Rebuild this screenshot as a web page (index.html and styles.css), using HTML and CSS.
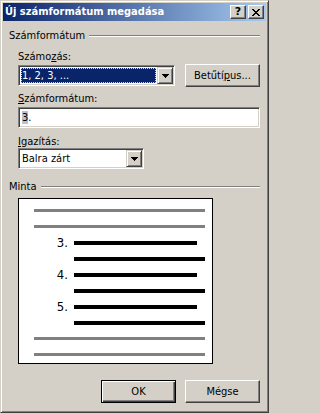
FILE: index.html
```html
<!DOCTYPE html>
<html lang="hu">
<head>
<meta charset="utf-8">
<title>Új számformátum megadása</title>
<link rel="stylesheet" href="styles.css">
</head>
<body>
<div class="window">
  <div class="titlebar">
    <span class="title">Új számformátum megadása</span>
    <div class="tbtns">
      <span class="tbtn help">?</span>
      <span class="tbtn close">
        <svg width="8" height="7" viewBox="0 0 8 7" shape-rendering="crispEdges"><path d="M0 0h2v1h-2zM6 0h2v1h-2zM1 1h2v1h-2zM5 1h2v1h-2zM2 2h4v1h-4zM3 3h2v1h-2zM2 4h4v1h-4zM1 5h2v1h-2zM5 5h2v1h-2zM0 6h2v1h-2zM6 6h2v1h-2z" fill="#000"/></svg>
      </span>
    </div>
  </div>
  <div class="body">
    <div class="group-head first"><span>Számformátum</span><i class="etch"></i></div>
    <div class="group">
      <div class="label first">Számo<u>z</u>ás:</div>
      <div class="row">
        <div class="combo wide">
          <div class="value sel">1, 2, 3, ...</div>
          <div class="drop"><svg width="7" height="4" viewBox="0 0 7 4" shape-rendering="crispEdges"><path d="M0 0h7v1h-7zM1 1h5v1h-5zM2 2h3v1h-3zM3 3h1v1h-1z" fill="#000"/></svg></div>
        </div>
        <div class="btn font">Betűtí<u>p</u>us...</div>
      </div>
      <div class="label l2"><u>S</u>zámformátum:</div>
      <div class="field"><span class="ph">3</span>.</div>
      <div class="label l3"><u>I</u>gazítás:</div>
      <div class="combo narrow">
        <div class="value">Balra zárt</div>
        <div class="drop"><svg width="7" height="4" viewBox="0 0 7 4" shape-rendering="crispEdges"><path d="M0 0h7v1h-7zM1 1h5v1h-5zM2 2h3v1h-3zM3 3h1v1h-1z" fill="#000"/></svg></div>
      </div>
    </div>
    <div class="group-head second"><span>Minta</span><i class="etch"></i></div>
    <div class="preview">
      <div class="pr"><i class="bar gray"></i></div>
      <div class="pr"><i class="bar gray"></i></div>
      <div class="pr"><span class="num">3.</span><i class="bar black short"></i></div>
      <div class="pr"><i class="bar black long"></i></div>
      <div class="pr"><span class="num">4.</span><i class="bar black short"></i></div>
      <div class="pr"><i class="bar black long"></i></div>
      <div class="pr"><span class="num">5.</span><i class="bar black short"></i></div>
      <div class="pr"><i class="bar black long"></i></div>
      <div class="pr"><i class="bar gray"></i></div>
      <div class="pr"><i class="bar gray"></i></div>
    </div>
    <div class="actions">
      <div class="btn default">OK</div>
      <div class="btn">Mégse</div>
    </div>
  </div>
</div>
</body>
</html>
```

FILE: styles.css
```css
html, body {
  margin: 0;
  padding: 0;
  background: #d4d0c8;
}
body {
  font-family: "DejaVu Sans Condensed", "DejaVu Sans", sans-serif;
  font-size: 11px;
  color: #000;
}
u { text-decoration: underline; text-underline-offset: 1px; }

.window {
  width: 269px;
  height: 413px;
  box-sizing: border-box;
  border: 1px solid;
  border-color: #d4d0c8 #404040 #404040 #d4d0c8;
  box-shadow: inset 1px 1px #fff, inset -1px -1px #808080;
  padding: 2px;
  background: #d4d0c8;
  display: flex;
  flex-direction: column;
}

.titlebar {
  height: 18px;
  display: flex;
  align-items: center;
  padding-left: 2px;
  background: linear-gradient(to right, #0a246a, #a6caf0);
}
.title {
  color: #fff;
  font-weight: bold;
  font-size: 11px;
  line-height: 18px;
  white-space: nowrap;
}
.tbtns {
  margin-left: auto;
  margin-right: 2px;
  display: flex;
  gap: 2px;
}
.tbtn {
  width: 16px;
  height: 14px;
  box-sizing: border-box;
  border: 1px solid;
  border-color: #fff #404040 #404040 #fff;
  box-shadow: inset -1px -1px #808080;
  background: #d4d0c8;
  display: flex;
  align-items: center;
  justify-content: center;
}
.tbtn.help {
  font-weight: bold;
  font-size: 11px;
  line-height: 12px;
  font-family: "DejaVu Sans", sans-serif;
}

.body {
  flex: 1;
  padding: 0 6px;
  display: flex;
  flex-direction: column;
}

.group-head {
  display: flex;
  align-items: center;
  height: 13px;
  line-height: 13px;
}
.group-head.first { margin-top: 8px; }
.group-head.second { margin-top: 11px; }
.etch {
  flex: 1;
  height: 0;
  border-top: 1px solid #808080;
  border-bottom: 1px solid #fff;
  margin-left: 4px;
}

.group { padding-left: 9px; }

.label {
  height: 13px;
  line-height: 13px;
  white-space: nowrap;
}
.label.first { margin-top: 8px; }
.label.l2 { margin-top: 5px; }
.label.l3 { margin-top: 7px; }

.row {
  display: flex;
  align-items: flex-start;
  margin-top: 1px;
}

.combo {
  height: 21px;
  box-sizing: border-box;
  border: 1px solid;
  border-color: #808080 #fff #fff #808080;
  box-shadow: inset 1px 1px #404040, inset -1px -1px #d4d0c8;
  padding: 1px;
  background: #fff;
  display: flex;
}
.combo.wide { width: 157px; margin-top: 1px; }
.combo.narrow { width: 126px; }

.value {
  flex: 1;
  line-height: 17px;
  padding-left: 2px;
  white-space: nowrap;
  overflow: hidden;
}
.value.sel {
  margin: 1px;
  padding-left: 1px;
  line-height: 15px;
  background: #0a246a;
  color: #fff;
  outline: 1px dotted #e8d898;
  outline-offset: -1px;
}
.drop {
  width: 16px;
  height: 17px;
  box-sizing: border-box;
  border: 1px solid;
  border-color: #d4d0c8 #404040 #404040 #d4d0c8;
  box-shadow: inset 1px 1px #fff, inset -1px -1px #808080;
  background: #d4d0c8;
  display: flex;
  align-items: center;
  justify-content: center;
}

.btn {
  width: 75px;
  height: 23px;
  box-sizing: border-box;
  border: 1px solid;
  border-color: #fff #404040 #404040 #fff;
  box-shadow: inset -1px -1px #808080;
  background: #d4d0c8;
  display: flex;
  align-items: center;
  justify-content: center;
  white-space: nowrap;
}
.btn.font { margin-left: 10px; }
.btn.default {
  border-color: #000;
  box-shadow: inset 1px 1px #fff, inset -1px -1px #404040, inset -2px -2px #808080;
}

.field {
  margin-top: 2px;
  width: 242px;
  height: 21px;
  box-sizing: border-box;
  border: 1px solid;
  border-color: #808080 #fff #fff #808080;
  box-shadow: inset 1px 1px #404040, inset -1px -1px #d4d0c8;
  padding: 1px 1px 1px 3px;
  background: #fff;
  line-height: 17px;
}
.ph { background: #c0c0c8; }

.preview {
  margin-top: 5px;
  margin-left: 9px;
  width: 195px;
  height: 166px;
  box-sizing: border-box;
  border: 1px solid #000;
  background: #fff;
  padding-top: 4px;
}
.pr {
  display: flex;
  align-items: flex-start;
  height: 16px;
}
.bar {
  display: block;
  margin-top: 6px;
}
.bar.gray {
  height: 3px;
  width: 171px;
  margin-left: 15px;
  background: #808080;
}
.bar.black {
  height: 4px;
  background: #000;
}
.bar.short { width: 123px; margin-left: 6px; }
.bar.long { width: 131px; margin-left: 55px; }
.num {
  width: 34px;
  margin-left: 15px;
  text-align: right;
  font-size: 13px;
  line-height: 16px;
}

.actions {
  display: flex;
  justify-content: flex-end;
  gap: 9px;
  margin-top: 16px;
}
```
